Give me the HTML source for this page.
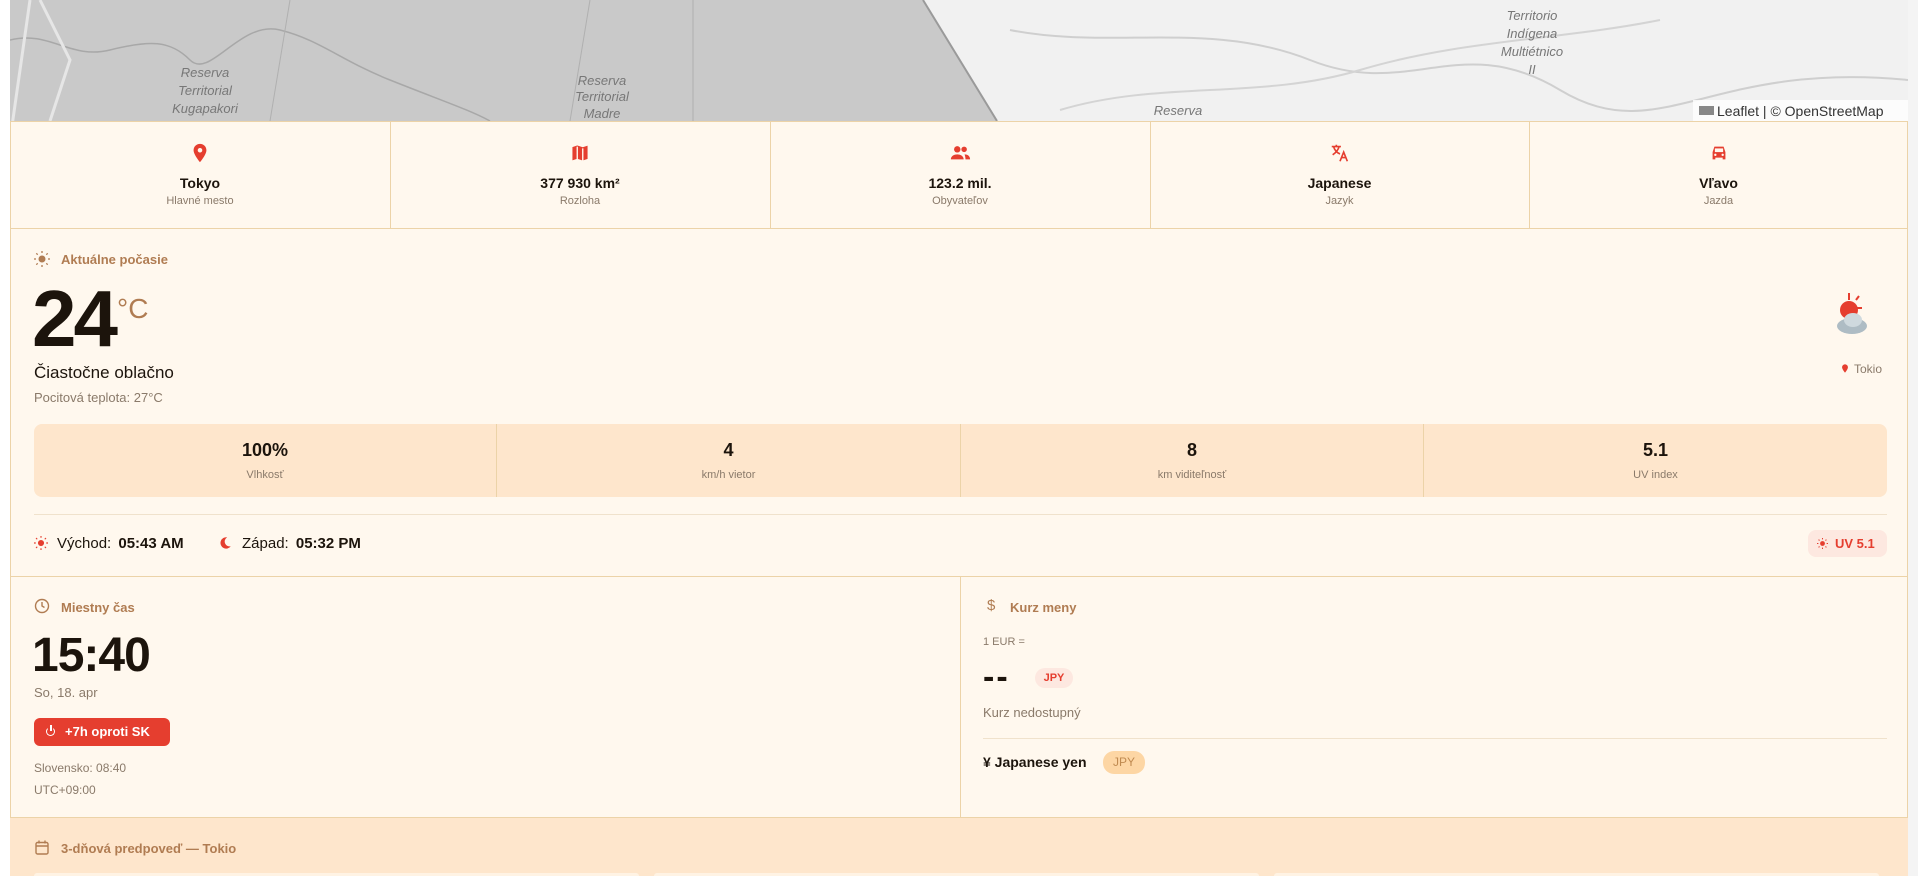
<!DOCTYPE html>
<html><head><meta charset="utf-8"><style>
*{margin:0;padding:0;box-sizing:border-box}
body{width:1918px;height:876px;overflow:hidden;background:#fff;font-family:"Liberation Sans",sans-serif;position:relative;color:#1c140c}
.a{position:absolute}
.c{text-align:center}
.t{font-weight:bold;font-size:14px}
.s{font-size:11px;color:#8a7a6a}
.hd{font-size:13px;font-weight:bold;color:#b07c52}
</style></head><body>
<!-- map -->
<svg class="a" style="left:10px;top:0" width="1898" height="121">
<rect width="1898" height="121" fill="#f1f1f1"/>
<polygon points="0,0 913,0 987,121 0,121" fill="#c9c9c9"/>
<line x1="913" y1="0" x2="987" y2="121" stroke="#9a9a9a" stroke-width="2"/>
<path d="M0,40 C40,30 60,60 100,50 S160,40 180,60 S230,20 270,30 S330,60 380,80 S460,110 480,121" fill="none" stroke="#a8a8a8" stroke-width="1.5"/>
<path d="M280,0 L260,121 M580,0 L560,121 M683,0 L683,121" stroke="#b0b0b0" fill="none"/>
<path d="M0,140 L20,0 M40,121 L60,60 L30,0" stroke="#e6e6e6" stroke-width="3" fill="none"/>
<path d="M1000,30 C1100,50 1200,20 1300,60 S1450,30 1550,90 S1700,60 1898,80" fill="none" stroke="#cfcfcf" stroke-width="2"/>
<path d="M1050,110 C1150,80 1250,100 1350,70 S1550,40 1650,20" fill="none" stroke="#d4d4d4" stroke-width="2"/>
<g font-family="Liberation Sans" font-style="italic" font-size="13" fill="#777" text-anchor="middle">
<text x="195" y="77">Reserva</text><text x="195" y="95">Territorial</text><text x="195" y="113">Kugapakori</text>
<text x="592" y="85">Reserva</text><text x="592" y="101">Territorial</text><text x="592" y="118">Madre</text>
<text x="1168" y="115">Reserva</text>
<text x="1522" y="20">Territorio</text><text x="1522" y="38">Indígena</text><text x="1522" y="56">Multiétnico</text><text x="1522" y="74">II</text>
</g>
<rect x="1683" y="100" width="215" height="21" fill="rgba(255,255,255,0.8)"/>
<rect x="1689" y="106" width="15" height="9" fill="#888"/>
<text x="1707" y="116" font-size="14" fill="#333" font-family="Liberation Sans">Leaflet | © OpenStreetMap</text>
</svg>
<div class="a" style="left:1908px;top:0;width:10px;height:876px;background:#f4f4f4"></div>
<!-- main panel -->
<div class="a" style="left:10px;top:121px;width:1898px;height:755px;background:#fff8ee;border-left:1px solid #ecd3a8;border-right:1px solid #ecd3a8"></div>
<!-- stats row -->
<div class="a" style="left:10px;top:121px;width:1898px;height:108px;border-top:1px solid #ecd3a8;border-bottom:1px solid #ecd3a8"></div>
<div class="a" style="left:390px;top:121px;width:1px;height:107px;background:#ecd3a8"></div>
<div class="a" style="left:770px;top:121px;width:1px;height:107px;background:#ecd3a8"></div>
<div class="a" style="left:1150px;top:121px;width:1px;height:107px;background:#ecd3a8"></div>
<div class="a" style="left:1529px;top:121px;width:1px;height:107px;background:#ecd3a8"></div>
<div class="a c" style="left:10px;top:142px;width:380px">
<svg width="22" height="22" viewBox="0 0 24 24"><path d="M12 2C8 2 5 5 5 9c0 5 7 13 7 13s7-8 7-13c0-4-3-7-7-7zm0 9.5a2.5 2.5 0 110-5 2.5 2.5 0 010 5z" fill="#e53e2f"/></svg>
<div class="t" style="margin-top:6px">Tokyo</div><div class="s" style="margin-top:4px">Hlavné mesto</div></div>
<div class="a c" style="left:390px;top:142px;width:380px">
<svg width="22" height="22" viewBox="0 0 24 24"><path d="M3 5l6-2 6 2 6-2v16l-6 2-6-2-6 2z M9 5v14M15 7v14" fill="#e53e2f" stroke="#fff8ee" stroke-width="1.5"/></svg>
<div class="t" style="margin-top:6px">377 930 km²</div><div class="s" style="margin-top:4px">Rozloha</div></div>
<div class="a c" style="left:770px;top:142px;width:380px">
<svg width="24" height="22" viewBox="0 0 24 24"><circle cx="9" cy="8" r="3.5" fill="#e53e2f"/><circle cx="16.5" cy="8" r="3" fill="#e53e2f"/><path d="M2 19c0-4 4-5.5 7-5.5s7 1.5 7 5.5zM17 13.5c3 0 6 1.5 6 5.5h-5c0-2-0.5-4-1-5.5z" fill="#e53e2f"/></svg>
<div class="t" style="margin-top:6px">123.2 mil.</div><div class="s" style="margin-top:4px">Obyvateľov</div></div>
<div class="a c" style="left:1150px;top:142px;width:379px">
<svg width="24" height="22" viewBox="0 0 24 24" fill="none" stroke="#e53e2f" stroke-width="1.8"><path d="M3 5h10M8 3v2M5 5c1 4 4 7 7 8M11 5c-1 4-4 7-7 9M12 21l4-10 4 10M13.5 17h5"/></svg>
<div class="t" style="margin-top:6px">Japanese</div><div class="s" style="margin-top:4px">Jazyk</div></div>
<div class="a c" style="left:1529px;top:142px;width:379px">
<svg width="22" height="22" viewBox="0 0 24 24"><path d="M5 11l2-6h10l2 6v8h-3v-2H8v2H5z" fill="#e53e2f"/><rect x="7.5" y="7" width="9" height="4" fill="#fff8ee"/><circle cx="8" cy="14" r="1.3" fill="#fff8ee"/><circle cx="16" cy="14" r="1.3" fill="#fff8ee"/></svg>
<div class="t" style="margin-top:6px">Vľavo</div><div class="s" style="margin-top:4px">Jazda</div></div>
<!-- weather -->
<svg class="a" style="left:34px;top:251px" width="16" height="16" viewBox="0 0 16 16"><circle cx="8" cy="8" r="3.5" fill="#b07c52"/><g stroke="#b07c52" stroke-width="1.3"><path d="M8 0v2M8 14v2M0 8h2M14 8h2M2.3 2.3l1.4 1.4M12.3 12.3l1.4 1.4M2.3 13.7l1.4-1.4M12.3 3.7l1.4-1.4"/></g></svg>
<div class="a hd" style="left:61px;top:252px">Aktuálne počasie</div>
<div class="a" style="left:32px;top:274px;font-size:80px;font-weight:bold;letter-spacing:-3px;line-height:90px">24</div>
<div class="a" style="left:117px;top:293px;font-size:28px;color:#b07c52">°C</div>
<div class="a" style="left:34px;top:363px;font-size:17px">Čiastočne oblačno</div>
<div class="a" style="left:34px;top:390px;font-size:13px;color:#8a7a6a">Pocitová teplota: 27°C</div>
<svg class="a" style="left:1826px;top:290px" width="50" height="50" viewBox="0 0 50 50"><g stroke="#e53e2f" stroke-width="2"><path d="M23 3v7M33 6l-3 4M36 18h-5"/></g><circle cx="23" cy="20" r="9" fill="#e53e2f"/><ellipse cx="26" cy="36" rx="15" ry="8" fill="#aebcc4"/><ellipse cx="27" cy="30" rx="9" ry="7" fill="#cfd9de"/></svg>
<svg class="a" style="left:1840px;top:363px" width="10" height="11" viewBox="0 0 24 24"><path d="M12 2C8 2 5 5 5 9c0 5 7 13 7 13s7-8 7-13c0-4-3-7-7-7z" fill="#e53e2f"/></svg>
<div class="a" style="left:1854px;top:362px;font-size:12px;color:#8a7a6a">Tokio</div>
<div class="a" style="left:34px;top:424px;width:1853px;height:73px;background:#fee6cc;border-radius:8px"></div>
<div class="a" style="left:496px;top:424px;width:1px;height:73px;background:#ecd3a8"></div>
<div class="a" style="left:960px;top:424px;width:1px;height:73px;background:#ecd3a8"></div>
<div class="a" style="left:1423px;top:424px;width:1px;height:73px;background:#ecd3a8"></div>
<div class="a c" style="left:34px;top:440px;width:462px"><div style="font-size:18px;font-weight:bold">100%</div><div class="s" style="margin-top:8px">Vlhkosť</div></div>
<div class="a c" style="left:497px;top:440px;width:463px"><div style="font-size:18px;font-weight:bold">4</div><div class="s" style="margin-top:8px">km/h vietor</div></div>
<div class="a c" style="left:961px;top:440px;width:462px"><div style="font-size:18px;font-weight:bold">8</div><div class="s" style="margin-top:8px">km viditeľnosť</div></div>
<div class="a c" style="left:1424px;top:440px;width:463px"><div style="font-size:18px;font-weight:bold">5.1</div><div class="s" style="margin-top:8px">UV index</div></div>
<div class="a" style="left:34px;top:514px;width:1853px;height:1px;background:#f0e2cc"></div>
<svg class="a" style="left:34px;top:536px" width="14" height="14" viewBox="0 0 16 16"><circle cx="8" cy="8" r="3.5" fill="#e53e2f"/><g stroke="#e53e2f" stroke-width="1.3"><path d="M8 0v2M8 14v2M0 8h2M14 8h2M2.3 2.3l1.4 1.4M12.3 12.3l1.4 1.4M2.3 13.7l1.4-1.4M12.3 3.7l1.4-1.4"/></g></svg>
<div class="a" style="left:57px;top:535px;font-size:15px">Východ: <b style="margin-left:3px">05:43 AM</b></div>
<svg class="a" style="left:219px;top:536px" width="13" height="14" viewBox="0 0 16 16"><path d="M10 1a7 7 0 104.5 11A6 6 0 0110 1z" fill="#e53e2f"/></svg>
<div class="a" style="left:242px;top:535px;font-size:15px">Západ: <b style="margin-left:3px">05:32 PM</b></div>
<div class="a" style="left:1808px;top:530px;width:79px;height:27px;background:#fde8e0;border-radius:8px;color:#e53e2f;font-size:13px;font-weight:bold;line-height:27px;padding-left:27px">UV 5.1</div>
<svg class="a" style="left:1817px;top:538px" width="11" height="11" viewBox="0 0 16 16"><circle cx="8" cy="8" r="3.5" fill="#e53e2f"/><g stroke="#e53e2f" stroke-width="1.5"><path d="M8 0v2M8 14v2M0 8h2M14 8h2M2.3 2.3l1.4 1.4M12.3 12.3l1.4 1.4M2.3 13.7l1.4-1.4M12.3 3.7l1.4-1.4"/></g></svg>
<div class="a" style="left:10px;top:576px;width:1898px;height:1px;background:#ecd3a8"></div>
<!-- local time -->
<div class="a" style="left:960px;top:576px;width:1px;height:241px;background:#ecd3a8"></div>
<svg class="a" style="left:34px;top:598px" width="16" height="16" viewBox="0 0 16 16" fill="none" stroke="#b07c52" stroke-width="1.4"><circle cx="8" cy="8" r="6.5"/><path d="M8 4v4l2.5 1.5"/></svg>
<div class="a hd" style="left:61px;top:600px">Miestny čas</div>
<div class="a" style="left:32px;top:628px;font-size:48px;font-weight:bold;letter-spacing:-1px">15:40</div>
<div class="a" style="left:34px;top:685px;font-size:13px;color:#8a7a6a">So, 18. apr</div>
<div class="a" style="left:34px;top:718px;width:136px;height:28px;background:#e53e2f;border-radius:6px;color:#fff;font-size:13px;font-weight:bold;line-height:28px;padding-left:31px">+7h oproti SK</div>
<div class="a" style="left:46px;top:727px;width:9px;height:9px;border:1.5px solid #fff;border-radius:50%;border-top-color:transparent"></div>
<div class="a" style="left:50px;top:725px;width:1.5px;height:6px;background:#fff"></div>
<div class="a" style="left:34px;top:761px;font-size:12px;color:#8a7a6a">Slovensko: 08:40</div>
<div class="a" style="left:34px;top:783px;font-size:12px;color:#8a7a6a">UTC+09:00</div>
<!-- currency -->
<div class="a" style="left:987px;top:597px;font-size:15px;color:#b07c52">$</div>
<div class="a hd" style="left:1010px;top:600px">Kurz meny</div>
<div class="a" style="left:983px;top:636px;font-size:11px;color:#8a7a6a">1 EUR =</div>
<div class="a" style="left:983px;top:658px;font-size:34px;font-weight:bold;letter-spacing:2px">--</div>
<div class="a" style="left:1035px;top:668px;width:38px;height:20px;background:#fde8e0;border-radius:10px;color:#e53e2f;font-size:11px;font-weight:bold;line-height:20px;text-align:center">JPY</div>
<div class="a" style="left:983px;top:705px;font-size:13px;color:#8a7a6a">Kurz nedostupný</div>
<div class="a" style="left:983px;top:738px;width:904px;height:1px;background:#f0e2cc"></div>
<div class="a" style="left:983px;top:754px;font-size:14px;font-weight:bold">¥ Japanese yen</div>
<div class="a" style="left:1103px;top:751px;width:42px;height:23px;background:#fdd6a4;border-radius:11px;color:#c08a50;font-size:12px;line-height:23px;text-align:center">JPY</div>
<!-- forecast -->
<div class="a" style="left:10px;top:817px;width:1898px;height:59px;background:#fee6cc;border-top:1px solid #ecd3a8"></div>
<svg class="a" style="left:35px;top:840px" width="14" height="15" viewBox="0 0 14 15" fill="none" stroke="#b07c52" stroke-width="1.4"><rect x="1" y="2.5" width="12" height="11.5" rx="1.5"/><path d="M1 6h12M4 0.5v3M10 0.5v3"/></svg>
<div class="a hd" style="left:61px;top:841px">3-dňová predpoveď — Tokio</div>
<div class="a" style="left:34px;top:873px;width:605px;height:3px;background:#fff3e4;border-radius:6px 6px 0 0"></div>
<div class="a" style="left:654px;top:873px;width:605px;height:3px;background:#fff3e4;border-radius:6px 6px 0 0"></div>
<div class="a" style="left:1274px;top:873px;width:605px;height:3px;background:#fff3e4;border-radius:6px 6px 0 0"></div>
</body></html>
